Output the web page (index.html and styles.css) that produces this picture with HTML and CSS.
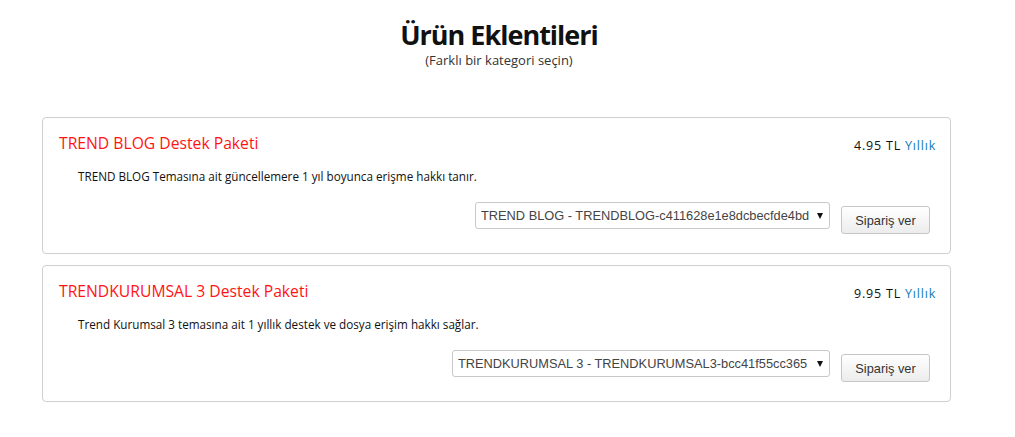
FILE: index.html
```html
<!DOCTYPE html>
<html lang="tr">
<head>
  <meta charset="UTF-8" />
  <title>Ürün Eklentileri</title>
  <link rel="stylesheet" href="styles.css">
</head>
<body>
  <div class="page">
    <div class="heading">
      <h1>Ürün Eklentileri</h1>
      <p class="subtitle">(Farklı bir kategori seçin)</p>
    </div>

    <div class="addon">
      <div class="addon-head">
        <h3 class="addon-title">TREND BLOG Destek Paketi</h3>
        <div class="addon-price">4.95 TL <span class="period">Yıllık</span></div>
      </div>
      <p class="addon-desc">TREND BLOG Temasına ait güncellemere 1 yıl boyunca erişme hakkı tanır.</p>
      <form class="addon-form">
        <span class="select-wrap">
          <select class="addon-select select-blog">
            <option>TREND BLOG - TRENDBLOG-c411628e1e8dcbecfde4bd</option>
          </select>
        </span>
        <button type="button" class="order-btn">Sipariş ver</button>
      </form>
    </div>

    <div class="addon">
      <div class="addon-head">
        <h3 class="addon-title">TRENDKURUMSAL 3 Destek Paketi</h3>
        <div class="addon-price">9.95 TL <span class="period">Yıllık</span></div>
      </div>
      <p class="addon-desc">Trend Kurumsal 3 temasına ait 1 yıllık destek ve dosya erişim hakkı sağlar.</p>
      <form class="addon-form">
        <span class="select-wrap">
          <select class="addon-select select-kurumsal">
            <option>TRENDKURUMSAL 3 - TRENDKURUMSAL3-bcc41f55cc365</option>
          </select>
        </span>
        <button type="button" class="order-btn">Sipariş ver</button>
      </form>
    </div>
  </div>
</body>
</html>
```

FILE: styles.css
```css
body {
  margin: 0;
  font-family: "Open Sans", Arial, sans-serif;
  background: #ffffff;
  color: #222;
}

.page {
  width: 998px;
  padding-top: 18px;
}

.heading {
  text-align: center;
  margin-bottom: 49px;
}

.heading h1 {
  margin: 0;
  font-size: 27px;
  font-weight: 700;
  letter-spacing: -1px;
  line-height: 34px;
  color: #111;
}

.subtitle {
  margin: 0;
  font-size: 13px;
  line-height: 16px;
  color: #333;
}

.addon {
  width: 909px;
  box-sizing: border-box;
  margin: 0 0 11px 42px;
  border: 1px solid #cfcfcf;
  border-radius: 4px;
  padding: 14px 14px 19px 16px;
}

.addon-head {
  display: flex;
  justify-content: space-between;
  align-items: center;
}

.addon-title {
  margin: 0;
  font-size: 15.7px;
  font-weight: 400;
  color: #ff1414;
}

.addon-price {
  font-size: 12.5px;
  letter-spacing: 0.8px;
  color: #111;
  padding-top: 4px;
}

.addon-price .period {
  color: #1479b8;
}

.addon-desc {
  margin: 14px 0 0 19px;
  font-size: 11.7px;
  color: #111;
}

.addon-form {
  display: flex;
  justify-content: flex-end;
  align-items: flex-start;
  gap: 11px;
  margin-top: 18px;
  padding-right: 6px;
}

/* native-looking arrow drawn over the select */
.select-wrap {
  position: relative;
  display: inline-block;
}

.select-wrap::after {
  content: "";
  position: absolute;
  right: 7px;
  top: 11px;
  border-left: 3.5px solid transparent;
  border-right: 3.5px solid transparent;
  border-top: 6px solid #111;
  pointer-events: none;
}

.addon-select {
  -webkit-appearance: none;
  appearance: none;
  height: 27px;
  box-sizing: border-box;
  border: 1px solid #c8c8c8;
  border-radius: 3px;
  background: #fff;
  font-family: Arial, "Liberation Sans", sans-serif;
  font-size: 12.8px;
  color: #444;
  padding: 0 18px 0 5px;
}

.select-blog {
  width: 355px;
}

.select-kurumsal {
  width: 378px;
}

.order-btn {
  margin-top: 4px;
  height: 28px;
  width: 89px;
  border: 1px solid #c6c6c6;
  border-radius: 3px;
  background: linear-gradient(#ffffff, #ececec);
  font-family: Arial, "Liberation Sans", sans-serif;
  font-size: 12.8px;
  color: #333;
  cursor: pointer;
}
```
